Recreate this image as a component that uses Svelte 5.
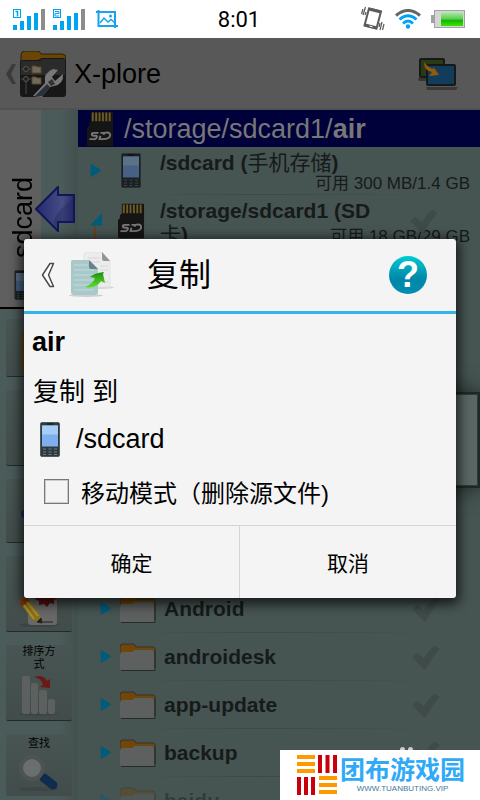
<script lang="ts">
	const folders = ['Android', 'androidesk', 'app-update', 'backup', 'baidu'];

	let moveMode = false;
	let open = true;

	function close() {
		open = false;
	}
</script>

{#snippet phone()}
	<svg class="phone" viewBox="0 0 20 35" aria-hidden="true">
		<rect x="0.5" y="0.5" width="19" height="34" rx="1.5" fill="#303a3c" stroke="#4e5a5c" />
		<rect x="7" y="1.5" width="6" height="1" fill="#111" />
		<rect x="2" y="3.5" width="16" height="21" fill="#7fb0ee" />
		<rect x="2" y="3.5" width="16" height="9" fill="#a5cdf7" />
		<path d="M3 27h3M8.500 27h3M14 27h3M3 30h3M8.500 30h3M14 30h3M3 32.500h3M8.500 32.500h3M14 32.500h3" stroke="#6b7c92" stroke-width="1.200" />
	</svg>
{/snippet}

{#snippet sdIcon()}
	<svg class="sd" viewBox="0 0 28 36" aria-hidden="true">
		<path d="M4 0h22q1 0 1 1v34q0 1-1 1H2q-2 0-2-2V17l2-2v-3l2-2z" fill="#151515" />
		<path d="M6 1v9M9.500 1v9M13 1v9M16.500 1v9M20 1v9M23.500 1v9" stroke="#6d5a25" stroke-width="2" />
		<path d="M12 22H7q-2 0-2 1.500T7 25h2q2 0 1 2t-3 1.500H2.500M14 22h4l-1 2M12 28.500h4q8 0 8-4T18 22M14 25l-1 3" fill="none" stroke="#777" stroke-width="2" />
	</svg>
{/snippet}

{#snippet expander()}
	<button class="expander" aria-label="Expand">
		<svg viewBox="0 0 12 15" width="12" height="15"><path d="M1 1.500v12L10.500 8V7z" fill="#005c7a" stroke="#005c7a" stroke-linejoin="round" /></svg>
	</button>
{/snippet}

{#snippet tick()}
	<button class="tick" aria-label="Select">
		<svg viewBox="0 0 28 26" width="28" height="26"><path d="M1 13l4-4 7 6Q16 7 23 2l4 3Q20 12 14 24l-2 1z" fill="#3e4b49" stroke="#3e4b49" stroke-linejoin="round" /></svg>
	</button>
{/snippet}

<div class="screen">
	<header class="status">
		<div class="signals">
			{#each [1, 2] as sim}
				<svg width="32" height="21" viewBox="0 0 32 21" aria-hidden="true">
					<rect x="0" y="16" width="4" height="5" fill="#00a2f2" />
					<rect x="7" y="12" width="4" height="9" fill="#00a2f2" />
					<rect x="14" y="7" width="4" height="14" fill="#00a2f2" />
					<rect x="21" y="4" width="4" height="17" fill="#00a2f2" />
					<rect x="28" y="0" width="4" height="21" fill="#8c8c8c" />
					<rect x="0.500" y="0.500" width="7" height="8" fill="none" stroke="#00a2f2" />
					{#if sim === 1}
						<path d="M2.500 2.500h2v5" fill="none" stroke="#00a2f2" stroke-width="1.500" />
					{:else}
						<path d="M2 2.500h4v2H2v2.500h4" fill="none" stroke="#00a2f2" />
					{/if}
				</svg>
			{/each}
			<svg class="shot" width="22" height="18" viewBox="0 0 22 18" aria-hidden="true">
				<path d="M0 2h19v16M2.500 0v16H22" fill="none" stroke="#16a4ee" stroke-width="2" />
				<path d="M4 13l4-5 4 4 3-2.500 4 3.500" fill="none" stroke="#16a4ee" stroke-width="1.500" />
				<circle cx="14.500" cy="6" r="1.500" fill="#16a4ee" />
			</svg>
		</div>
		<time>8:01</time>
		<div class="indicators">
			<svg width="24" height="26" viewBox="0 0 24 26" aria-hidden="true">
				<path d="M8 2.500l12 3-4.500 17-12-3z" fill="none" stroke="#5b5b5b" stroke-width="2" />
				<path d="M8 3l12 3M4 19l12 3" stroke="#5b5b5b" stroke-width="3" />
				<path d="M8.500 20l3 .8" stroke="#fff" />
				<path d="M2 3L0.500 8M4.500 1L2 9M5 6L4 9M19 17l-1 4M21 16l-2 8M23 18l-1.500 6" stroke="#5b5b5b" stroke-width="1.200" />
			</svg>
			<svg width="26" height="20" viewBox="0 0 26 20" aria-hidden="true">
				<path d="M1 6.500Q13-3.500 25 6.500" fill="none" stroke="#666" stroke-width="3" />
				<path d="M4.500 10.500Q13 3 21.500 10.500M8 14.500Q13 9.500 18 14.500" fill="none" stroke="#00a2f2" stroke-width="2.800" />
				<circle cx="13" cy="17.500" r="2.200" fill="#00a2f2" />
			</svg>
			<svg width="34" height="18" viewBox="0 0 34 18" aria-hidden="true">
				<defs>
					<linearGradient id="charge" x2="0" y2="1">
						<stop offset="0" stop-color="#b6e8ae" />
						<stop offset="0.500" stop-color="#58ce4e" />
						<stop offset="0.600" stop-color="#12b800" />
						<stop offset="1" stop-color="#3ee000" />
					</linearGradient>
				</defs>
				<path d="M0 5h3V0h31v18H3v-5H0z" fill="#a2a2a2" />
				<rect x="4" y="1" width="29" height="16" fill="#d6d6d6" />
				<rect x="10" y="2" width="22" height="14" fill="url(#charge)" />
			</svg>
		</div>
	</header>

	<div class="appbar">
		<button class="up" aria-label="Back">
			<svg width="10" height="22" viewBox="0 0 10 22"><path d="M10 1L6 1 0 11l6 10h4L5 11z" fill="#3b3b3b" /></svg>
		</button>
		<svg class="logo" width="46" height="46" viewBox="0 0 46 46" aria-hidden="true">
			<path d="M1 12V4q0-4 4-4h12q3 0 4 3h21q4 0 4 4v5z" fill="#694506" stroke="#292010" />
			<path d="M0 11q0-2 3-2h15l4-2h21q3 0 3 3v33q0 3-3 3H3q-3 0-3-3z" fill="#171717" />
			<path d="M1 10h18l4-2h22v16H1z" fill="#2b2b2b" />
			<path d="M1 18h10M1 28h10M6 28v15" stroke="#484848" />
			<circle cx="6" cy="18" r="2.500" fill="#222" stroke="#555" />
			<circle cx="6" cy="28" r="2.500" fill="#222" stroke="#555" />
			<path d="M12 15h4l1 1h4v6h-9zM12 26h4l1 1h4v6h-9z" fill="#6a6a6a" stroke="#674714" />
			<path d="M13 45l12-13q-2-10 8-14l5 1-6 7 3 4 8-7q1 10-9 12l-4 1-8 10z" fill="#777" />
			<path d="M15 45l12-12 3 3-7 9z" fill="#2c303a" />
			<path d="M28 31l4-3 3 5-4 2z" fill="#333" />
		</svg>
		<h1>X-plore</h1>
		<button class="swap" aria-label="Switch panes">
			<svg width="40" height="32" viewBox="0 0 40 32">
				<path d="M0 20h15v3H1z" fill="#353535" />
				<rect x="2" y="1" width="24" height="18" rx="1" fill="#293b15" stroke="#181818" stroke-width="2" />
				<path d="M8 29h32l-2 3H9z" fill="#3a3a3a" />
				<rect x="9" y="7" width="28" height="20" rx="1" fill="#113c5b" stroke="#181818" stroke-width="2" />
				<path d="M6 4q4 6 10 7l-1-3 6 9-10 1 3-4Q6 13 6 4z" fill="#95590c" />
			</svg>
		</button>
	</div>

	<main>
		<aside>
			<button class="tab">
				<span>sdcard</span>
				{@render phone()}
			</button>
			<svg class="arrow" width="42" height="46" viewBox="0 0 42 46" aria-hidden="true">
				<defs>
					<linearGradient id="blue" x2="1">
						<stop offset="0" stop-color="#252b6a" />
						<stop offset="0.700" stop-color="#464c85" />
						<stop offset="1" stop-color="#252a68" />
					</linearGradient>
				</defs>
				<path d="M1 23L23 1v8h16v27H23v9z" fill="url(#blue)" stroke="#101657" stroke-width="2" />
				<path d="M18 37q4-13 20-24v22H22v7z" fill="#202660" opacity="0.400" />
			</svg>
			<nav>
				<button class="tool first" aria-label="Folder"><i class="folder-edge"></i></button>
				<button class="tool" aria-label="Copy"></button>
				<button class="tool short" aria-label="Move"><i class="blue-edge"></i></button>
				<button class="tool" aria-label="Rename">
					<svg width="40" height="42" viewBox="0 0 40 42">
						<ellipse cx="20" cy="40" rx="20" ry="2" fill="#3a4543" />
						<path d="M9 12h29v25q0 3-3 3H12q-3 0-3-3z" fill="#686868" />
						<path d="M26 0l3 3 4-2 1 4 4 1-2 4 3 3-4 2v4l-4-1-3 4-3-3-5 1v-4l-4-2 3-4-1-4 4-1z" fill="#5a1010" />
						<path d="M0 17l7-6 14 19 1 8-8-3z" fill="#8a701c" />
						<path d="M0 17l7-6 4 5-8 6z" fill="#81350d" />
						<path d="M8 17l11 14M5 20l10 14" stroke="#aa912d" stroke-width="2" />
						<path d="M18 37l4-4 1 5zM23 37h11" fill="#222" stroke="#222" />
					</svg>
				</button>
				<button class="tool">
					<span>排序方式</span>
					<svg width="40" height="40" viewBox="0 0 40 40" aria-hidden="true">
						<ellipse cx="20" cy="38" rx="20" ry="2" fill="#3c4745" />
						<g fill="#5c605f">
							<rect x="3" y="0" width="8" height="38" rx="2" />
							<rect x="12" y="7" width="7" height="31" rx="2" />
							<rect x="20" y="14" width="8" height="24" rx="2" />
							<rect x="29" y="23" width="7" height="15" rx="2" />
						</g>
						<path d="M15 1q9-3 13 4l3-2v9l-10-1 3-2q-2-7-9-8z" fill="#6c1817" />
					</svg>
				</button>
				<button class="tool search">
					<span>查找</span>
					<svg width="40" height="36" viewBox="0 0 40 36" aria-hidden="true">
						<ellipse cx="19" cy="34" rx="20" ry="2" fill="#3c4745" />
						<path d="M25 23l9 7" stroke="#0f2c4f" stroke-width="9" stroke-linecap="round" />
						<circle cx="13" cy="13" r="11" fill="#696f6e" stroke="#4e5352" stroke-width="4" />
					</svg>
				</button>
			</nav>
		</aside>

		<section>
			<h2>{@render sdIcon()}<span>/storage/sdcard1/<b>air</b></span></h2>
			<ul>
				<li class="volume">
					{@render expander()}
					<div class="icon">{@render phone()}</div>
					<strong>/sdcard (<span>手机存储</span>)</strong>
					<small>可用 300 MB/1.4 GB</small>
				</li>
				<li class="volume tall">
					<svg class="branch" width="13" height="34" viewBox="0 0 13 34" aria-hidden="true">
						<path d="M1 12L11.500 1v11z" fill="#005c7a" stroke="#005c7a" stroke-linejoin="round" />
						<path d="M5 13v21" stroke="#664322" stroke-width="2" />
					</svg>
					<div class="icon">{@render sdIcon()}</div>
					<strong>/storage/sdcard1 (SD <span>卡</span>)</strong>
					<small>可用 18 GB/29 GB</small>
					{@render tick()}
				</li>
				<li class="gap"></li>
				{#each folders as name}
					<li class="folder">
						{@render expander()}
						<svg width="36" height="28" viewBox="0 0 36 28" aria-hidden="true">
							<path d="M0 18V4q0-3 3-3h10q2 0 3 3h17q2 0 2 2v18H4z" fill="#704708" stroke="#2e3430" />
							<path d="M1 27q-1 0-1-2V12q0-3 3-3h9l3-2h16q3 0 3 3v17z" fill="#5e605f" />
							<path d="M1 27.500h34V8" fill="none" stroke="#252c2b" />
						</svg>
						<strong>{name}</strong>
						{@render tick()}
					</li>
				{/each}
			</ul>
			<div class="popup"></div>
		</section>
	</main>

	{#if open}
		<div class="overlay">
			<form class="dialog" role="dialog" aria-labelledby="title" on:submit|preventDefault={close}>
				<div class="heading">
					<button type="button" class="back" aria-label="Back" on:click={close}>
						<svg width="14" height="26" viewBox="0 0 14 26"><path d="M12.500 1.500H9L1.500 13 9 24.500h3.500L7.500 13z" fill="#fff" stroke="#4a4a4a" stroke-width="1.500" stroke-linejoin="round" /></svg>
					</button>
					<svg width="46" height="46" viewBox="0 0 46 46" aria-hidden="true">
						<defs>
							<linearGradient id="leaf" x2="0" y2="1">
								<stop offset="0" stop-color="#1b8e12" />
								<stop offset="0.600" stop-color="#43c01b" />
								<stop offset="1" stop-color="#55df28" />
							</linearGradient>
						</defs>
						<ellipse cx="17" cy="43.500" rx="17" ry="1.500" fill="#cfcfcf" />
						<ellipse cx="32" cy="35.500" rx="13" ry="1.500" fill="#d5d5d5" />
						<path d="M17 0h16l8 9v26H15V2z" fill="#ececec" stroke="#e2e2e2" />
						<path d="M33 0v7q0 2 2 2h6z" fill="#959595" />
						<path d="M19 6h12M19 10h12M31 14h8M31 18h8M31 30h8" stroke="#d6d6d6" />
						<path d="M2 10q0-2 2-2h16l9 9v23q0 3-3 3H5q-3 0-3-3z" fill="#a9c8ca" />
						<path d="M20 8v7q0 2 2 2h7z" fill="#668286" />
						<path d="M5 13h14M5 18h20M5 23h20M5 28h20M5 33h20M5 38h20" stroke="#b9d3d5" stroke-width="1.500" />
						<path d="M16 35q8-3 10-9l-5-1q4-4 14-5l-1 2 2 9-4-2q-5 8-16 6z" fill="url(#leaf)" />
					</svg>
					<h2 id="title">复制</h2>
					<button type="button" class="help" aria-label="Help">?</button>
				</div>
				<div class="body">
					<b class="file">air</b>
					<p>复制 到</p>
					<div class="target">
						{@render phone()}
						<span>/sdcard</span>
					</div>
					<label>
						<input type="checkbox" bind:checked={moveMode} />
						移动模式（删除源文件)
					</label>
				</div>
				<div class="actions">
					<button type="submit">确定</button>
					<button type="button" on:click={close}>取消</button>
				</div>
			</form>
		</div>
	{/if}

	<a class="brand" href="#home">
		<svg width="40" height="40" viewBox="0 0 40 40" aria-hidden="true">
			<path d="M0 2h18M0 9h18M0 16h18M22 23h18M22 30h18M22 37h18" stroke="#f90" stroke-width="4" />
			<path d="M23 0v18M30.500 0v18M38 0v18M2 22v18M9 22v18M16 22v18" stroke="#c9000b" stroke-width="4" />
		</svg>
		<span class="name">团布游戏园<small>WWW.TUANBUTING.VIP</small></span>
	</a>
</div>

<style>
	:global(body) {
		background: #465452;
	}

	.screen {
		position: relative;
		display: flex;
		flex-direction: column;
		height: 100vh;
		overflow: hidden;
		font-family: 'Liberation Sans', 'Noto Sans CJK SC', sans-serif;
		color: #000;
	}

	.screen * {
		box-sizing: border-box;
	}

	button {
		padding: 0;
		border: 0;
		background: none;
		color: inherit;
		font-family: inherit;
	}

	h1, h2, p, ul {
		margin: 0;
		padding: 0;
		font-weight: normal;
	}

	svg {
		display: block;
		flex: none;
	}

	.status {
		display: grid;
		grid-template-columns: 1fr auto 1fr;
		align-items: center;
		height: 38px;
		flex: none;
		padding: 0 15px 0 13px;
		background: #fff;
	}

	.signals, .indicators {
		display: flex;
		align-items: center;
		gap: 8px;
	}

	.shot {
		margin-left: 3px;
	}

	.indicators {
		justify-content: flex-end;
		gap: 10px;
	}

	time {
		font-family: Roboto, sans-serif;
		font-size: 22px;
	}

	.appbar {
		display: flex;
		align-items: center;
		height: 72px;
		flex: none;
		padding: 0 22px 0 6px;
		background: #585858;
		box-shadow: inset 0 -2px #515151;
	}

	.logo {
		margin: 0 8px 0 4px;
	}

	h1 {
		flex: 1;
		font-size: 27px;
	}

	main {
		display: grid;
		grid-template-columns: 78px 1fr;
		flex: 1;
		min-height: 0;
	}

	aside {
		position: relative;
		min-height: 0;
		background: linear-gradient(90deg, #4b5b59 60px, #42504e);
	}

	.tab {
		display: flex;
		flex-direction: column;
		align-items: center;
		justify-content: flex-end;
		gap: 12px;
		width: 41px;
		height: 199px;
		padding: 0 0 7px 5px;
		background: #5f5f5f;
		border-bottom: 2px solid #000;
	}

	.tab span {
		writing-mode: vertical-rl;
		transform: rotate(180deg);
		font-size: 27px;
		line-height: 32px;
	}

	.phone {
		width: 20px;
		height: 35px;
	}

	.tab .phone {
		height: 30px;
	}

	.tab .phone, .icon .phone {
		filter: brightness(0.55);
	}

	.arrow {
		position: absolute;
		top: 76px;
		left: 35px;
	}

	nav {
		display: flex;
		flex-direction: column;
		gap: 13px;
		padding: 10px 6px 0;
	}

	.tool {
		display: flex;
		flex-direction: column;
		align-items: center;
		justify-content: flex-end;
		gap: 5px;
		height: 76px;
		flex: none;
		padding: 3px 12px 4px;
		background: linear-gradient(#485553, #424d4b);
		border-bottom: 1px solid #222b2a;
		border-radius: 2px;
		font-size: 11px;
		line-height: 13px;
	}

	.tool.first {
		height: 58px;
	}

	.tool.short {
		height: 64px;
	}

	.tool.search {
		height: 62px;
		border-bottom-color: #414d4b;
	}

	.folder-edge {
		align-self: flex-start;
		width: 12px;
		height: 40px;
		margin-left: 3px;
		background: #5d4a1e;
		border-radius: 3px;
	}

	.blue-edge {
		align-self: flex-start;
		width: 12px;
		height: 8px;
		margin: 0 0 20px 3px;
		background: #1a2b66;
		border-radius: 4px;
	}

	section {
		position: relative;
		min-height: 0;
		background: #465452;
	}

	section h2 {
		display: flex;
		align-items: center;
		gap: 10px;
		height: 37px;
		padding-left: 9px;
		background: #00003a;
		color: #777;
		font-size: 27px;
	}

	section h2 span {
		padding-top: 2px;
	}

	.sd {
		width: 27px;
		height: 36px;
	}

	ul {
		list-style: none;
	}

	li {
		border-bottom: 1px solid #3e4b49;
		border-image: linear-gradient(90deg, #465452 15%, #3c4947 45%, #465452 90%) 1;
		color: #161a1a;
		font-size: 21px;
	}

	.volume {
		display: grid;
		grid-template-columns: 27px 43px 1fr 84px;
		align-items: center;
		justify-items: start;
		height: 48px;
		padding-left: 12px;
	}

	.volume.tall {
		height: 53px;
	}

	.volume > :global(*) {
		grid-row: 1;
	}

	.volume strong {
		grid-column: 3;
		align-self: start;
		padding-top: 4px;
		line-height: 24px;
	}

	.volume strong span {
		font-weight: normal;
	}

	.volume small {
		grid-column: 3 / 5;
		align-self: end;
		justify-self: end;
		padding-right: 10px;
		font-size: 17px;
		line-height: 21px;
	}

	.volume .tick {
		grid-column: 4;
		margin-left: 14px;
	}

	.icon {
		width: 28px;
		display: flex;
		justify-content: center;
	}

	.branch {
		align-self: end;
	}

	.gap {
		height: 337px;
	}

	.folder {
		display: flex;
		align-items: center;
		height: 48px;
		padding: 0 40px 0 22px;
	}

	.folder > svg {
		margin: 0 8px;
	}

	.folder strong {
		flex: 1;
	}

	.folder:last-child {
		opacity: 0.4;
	}

	.popup {
		position: absolute;
		top: 284px;
		right: 2px;
		width: 60px;
		height: 92px;
		background: #596664;
		border: 1px solid #2f3b39;
		box-shadow: 0 0 0 2px #1f2827, 0 0 18px 4px #222c2b;
	}

	.overlay {
		position: absolute;
		inset: 38px 0 0;
		display: flex;
		align-items: center;
		justify-content: center;
		padding: 0 24px 2px;
	}

	.dialog {
		width: 100%;
		background: #f4f4f4;
		border-radius: 3px;
		box-shadow: 0 3px 12px 3px rgba(0, 0, 0, 0.7);
	}

	.heading {
		display: flex;
		align-items: center;
		height: 75px;
		padding: 0 29px 0 17px;
		border-bottom: 3px solid #33b5e5;
	}

	.heading > svg {
		margin: 0 32px 0 14px;
	}

	.heading h2 {
		flex: 1;
		font-size: 32px;
		line-height: 40px;
	}

	.help {
		width: 38px;
		height: 38px;
		border-radius: 50%;
		background: linear-gradient(#00cbd5, #0087a9 60%, #008eb0);
		color: #fff;
		font-size: 36px;
		font-weight: bold;
		line-height: 38px;
	}

	.body {
		padding: 12px 8px 0;
		height: 211px;
		font-size: 27px;
	}

	.file {
		display: block;
		line-height: 32px;
	}

	p {
		padding: 14px 0 12px 1px;
		font-size: 26px;
		line-height: 40px;
	}

	.target {
		display: flex;
		align-items: center;
		gap: 16px;
		height: 32px;
		padding-left: 8px;
	}

	label {
		display: flex;
		align-items: center;
		gap: 12px;
		height: 36px;
		margin-top: 18px;
		padding-left: 12px;
		font-size: 24px;
	}

	input {
		appearance: none;
		width: 25px;
		height: 25px;
		margin: 0;
		border: 1px solid #777;
		outline: 1px solid #ccc;
		outline-offset: -2px;
	}

	input:checked {
		background: #33b5e5;
	}

	.actions {
		display: grid;
		grid-template-columns: 1fr 1fr;
		height: 73px;
		border-top: 1px solid #d4d4d4;
	}

	.actions button {
		font-size: 21px;
	}

	.actions button:first-child {
		border-right: 1px solid #d4d4d4;
	}

	.brand {
		position: absolute;
		right: 0;
		bottom: 0;
		display: flex;
		align-items: center;
		gap: 3px;
		width: 200px;
		height: 50px;
		padding-left: 17px;
		background: #fff;
		color: #2eaaf8;
		text-decoration: none;
	}

	.brand::before {
		content: '';
		position: absolute;
		top: -3px;
		left: 120px;
		width: 5px;
		height: 3px;
		border-radius: 3px 3px 0 0;
		background: #c9cecd;
		box-shadow: 8px 0 #c9cecd;
	}

	.name {
		display: flex;
		flex-direction: column;
		align-items: center;
		font-size: 25px;
		font-weight: bold;
		line-height: 28px;
	}

	.name small {
		color: #41799a;
		font-size: 8px;
		font-weight: normal;
		line-height: 10px;
	}
</style>
